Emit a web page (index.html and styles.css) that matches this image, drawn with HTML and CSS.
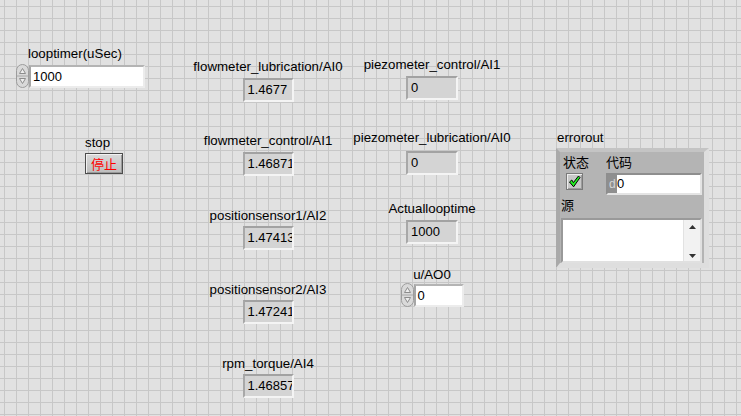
FILE: index.html
```html
<!DOCTYPE html>
<html lang="zh">
<head>
    <meta charset="UTF-8">
    <title>Front Panel</title>
    <link rel="stylesheet" href="styles.css">
</head>
<body>
<div class="panel">
    <div class="col col-a">
        <div class="item item-timer">
            <div class="label">looptimer(uSec)</div>
            <div class="numctl">
                <svg class="spin" width="13" height="24" viewBox="0 0 13 24">
                    <rect x="0.5" y="0.5" width="12" height="23" rx="6" fill="#d9d9d9" stroke="#9c9c9c"/>
                    <line x1="1" y1="12" x2="12" y2="12" stroke="#a8a8a8"/>
                    <path d="M6.5 4.5 L9.5 9.5 H3.5 Z" fill="#eeeeee" stroke="#8c8c8c"/>
                    <path d="M6.5 19.5 L9.5 14.5 H3.5 Z" fill="#eeeeee" stroke="#8c8c8c"/>
                </svg>
                <div class="field field-wide">1000</div>
            </div>
        </div>
        <div class="item item-stop">
            <div class="label">stop</div>
            <div class="btn-stop">停止</div>
        </div>
    </div>

    <div class="col col-b">
        <div class="item">
            <div class="label">flowmeter_lubrication/AI0</div>
            <div class="ind">1.4677</div>
        </div>
        <div class="item">
            <div class="label">flowmeter_control/AI1</div>
            <div class="ind">1.46871</div>
        </div>
        <div class="item">
            <div class="label">positionsensor1/AI2</div>
            <div class="ind">1.47413</div>
        </div>
        <div class="item">
            <div class="label">positionsensor2/AI3</div>
            <div class="ind">1.47241</div>
        </div>
        <div class="item">
            <div class="label">rpm_torque/AI4</div>
            <div class="ind">1.46857</div>
        </div>
    </div>

    <div class="col col-c">
        <div class="item">
            <div class="label">piezometer_control/AI1</div>
            <div class="ind ind-wide">0</div>
        </div>
        <div class="item">
            <div class="label">piezometer_lubrication/AI0</div>
            <div class="ind ind-wide">0</div>
        </div>
        <div class="item">
            <div class="label">Actuallooptime</div>
            <div class="ind ind-wide">1000</div>
        </div>
        <div class="item">
            <div class="label">u/AO0</div>
            <div class="numctl">
                <svg class="spin" width="13" height="24" viewBox="0 0 13 24">
                    <rect x="0.5" y="0.5" width="12" height="23" rx="6" fill="#d9d9d9" stroke="#9c9c9c"/>
                    <line x1="1" y1="12" x2="12" y2="12" stroke="#a8a8a8"/>
                    <path d="M6.5 4.5 L9.5 9.5 H3.5 Z" fill="#eeeeee" stroke="#8c8c8c"/>
                    <path d="M6.5 19.5 L9.5 14.5 H3.5 Z" fill="#eeeeee" stroke="#8c8c8c"/>
                </svg>
                <div class="field field-small">0</div>
            </div>
        </div>
    </div>

    <div class="col col-d">
        <div class="label label-err">errorout</div>
        <div class="cluster">
            <div class="cl-top">
                <div class="cl-status">
                    <div class="cjk">状态</div>
                    <div class="led">
                        <svg width="13" height="13" viewBox="0 0 13 13">
                            <path d="M1.5 7 L3.8 5 L5.4 7.6 L10.5 1 L12 2.6 L5.6 11.8 Z" fill="#22ee22" stroke="#000" stroke-width="1" stroke-linejoin="round"/>
                        </svg>
                    </div>
                </div>
                <div class="cl-code">
                    <div class="cjk">代码</div>
                    <div class="code-field">
                        <span class="radix">d</span>
                        <span class="code-val">0</span>
                    </div>
                </div>
            </div>
            <div class="cjk cjk-src">源</div>
            <div class="strbox">
                <div class="scroll">
                    <svg width="7" height="4" viewBox="0 0 7 4"><path d="M3.5 0 L7 4 H0 Z" fill="#333"/></svg>
                    <svg width="7" height="4" viewBox="0 0 7 4"><path d="M3.5 4 L7 0 H0 Z" fill="#333"/></svg>
                </div>
            </div>
        </div>
    </div>
</div>
</body>
</html>
```

FILE: styles.css
```css
body {
    margin: 0;
    width: 741px;
    height: 416px;
    overflow: hidden;
    background-color: #e1e1e1;
    background-image: linear-gradient(#c7c7c7 1px, transparent 1px),
                      linear-gradient(90deg, #c7c7c7 1px, transparent 1px);
    background-size: 12px 12px;
    background-position: 4px 6px;
    font-family: "Liberation Sans", "Noto Sans CJK SC", sans-serif;
    font-size: 13px;
    color: #000;
}
.panel {
    display: flex;
    height: 416px;
    padding-left: 16px;
    box-sizing: border-box;
}
.col {
    display: flex;
    flex-direction: column;
}
.col-a {
    width: 130px;
}
.col-b {
    width: 160px;
    margin-left: 42px;
}
.col-c {
    width: 168px;
}
.col-d {
    margin-left: 40px;
}
.item {
    display: flex;
    flex-direction: column;
    align-items: center;
}
.label {
    font-size: 13.3px;
    line-height: 16px;
    white-space: nowrap;
    margin-bottom: 3px;
}

/* column a */
.item-timer {
    align-items: flex-start;
    margin-top: 46px;
}
.item-timer .label {
    margin-left: 12px;
    margin-bottom: 2px;
}
.item-stop {
    align-items: flex-start;
    margin-top: 47px;
    margin-left: 69px;
}
.item-stop .label {
    margin-bottom: 2px;
}
.btn-stop {
    width: 38px;
    height: 21px;
    box-sizing: border-box;
    border: 1px solid #4c4c4c;
    box-shadow: inset 1px 1px 0 #f2f2f2, inset -1px -1px 0 #9a9a9a;
    background: linear-gradient(#dadada, #bdbdbd);
    color: #ff0000;
    font-family: "Noto Sans CJK SC", sans-serif;
    font-size: 13px;
    line-height: 19px;
    text-align: center;
}

/* numeric controls */
.numctl {
    display: flex;
    align-items: flex-start;
}
.spin {
    display: block;
}
.field {
    height: 23px;
    box-sizing: border-box;
    margin-top: 1px;
    border: 2px solid;
    border-color: #b4b4b4 #ececec #ececec #a6a6a6;
    background: #fff;
    padding-left: 2px;
    line-height: 19px;
}
.field-wide {
    width: 116px;
}
.field-small {
    width: 50px;
}

/* indicators */
.ind {
    width: 51px;
    height: 24px;
    box-sizing: border-box;
    border: 2px solid;
    border-color: #a2a2a2 #f4f4f4 #f4f4f4 #a8a8a8;
    background: #d4d4d4;
    padding-left: 3px;
    line-height: 20px;
    white-space: nowrap;
    overflow: hidden;
}
.ind-wide {
    width: 52px;
}
.col-b .item {
    margin-top: 31px;
}
.col-b .item:first-child {
    margin-top: 59px;
}
.col-b .item:nth-child(n+3) .label {
    margin-top: 1px;
    margin-bottom: 2px;
}
.col-c .item:nth-child(1) {
    margin-top: 57px;
}
.col-c .item:nth-child(2) {
    margin-top: 29px;
}
.col-c .item:nth-child(2) .label {
    margin-top: 1px;
    margin-bottom: 5px;
}
.col-c .item:nth-child(3) {
    margin-top: 26px;
}
.col-c .item:nth-child(4) {
    margin-top: 23px;
}
.col-c .item:nth-child(4) .label {
    margin-bottom: 0;
}

/* error cluster */
.label-err {
    margin-top: 130px;
    margin-left: 1px;
    margin-bottom: 2px;
}
.cluster {
    width: 153px;
    height: 120px;
    box-sizing: border-box;
    border-style: solid;
    border-width: 4px 5px 5px 4px;
    border-color: #c4c4c4 #dedede #dedede #a9a9a9;
    background: #b4b4b4;
    padding-top: 1px;
}
.cjk {
    font-family: "Noto Sans CJK SC", sans-serif;
    font-size: 13px;
    line-height: 18px;
}
.cl-top {
    display: flex;
}
.cl-status {
    width: 46px;
    padding-left: 3px;
    box-sizing: border-box;
}
.led {
    width: 17px;
    height: 17px;
    box-sizing: border-box;
    margin-top: 2px;
    margin-left: 3px;
    border: 1px solid #7a7a7a;
    box-shadow: inset 1px 1px 0 #eeeeee, inset -1px -1px 0 #9c9c9c;
    background: #c8c8c8;
    display: flex;
    align-items: center;
    justify-content: center;
}
.code-field {
    display: flex;
    width: 96px;
    height: 22px;
    box-sizing: border-box;
    margin-top: 2px;
    border: 2px solid;
    border-color: #8e8e8e #e4e4e4 #e4e4e4 #8e8e8e;
    background: #8f8f8f;
}
.radix {
    width: 8px;
    color: #d6d6d6;
    font-size: 12px;
    line-height: 18px;
    padding-left: 1px;
}
.code-val {
    flex: 1;
    background: #fff;
    line-height: 18px;
}
.cjk-src {
    margin-left: 1px;
    margin-top: 1px;
}
.strbox {
    width: 141px;
    height: 45px;
    box-sizing: border-box;
    margin-top: 4px;
    margin-left: 1px;
    border: 2px solid;
    border-color: #999 #e0e0e0 #e0e0e0 #999;
    background: #fff;
    display: flex;
    justify-content: flex-end;
}
.scroll {
    width: 17px;
    background: #f2f2f2;
    border-left: 1px solid #e2e2e2;
    display: flex;
    flex-direction: column;
    align-items: center;
    justify-content: space-between;
    padding: 5px 0 3px;
    box-sizing: border-box;
}
```
